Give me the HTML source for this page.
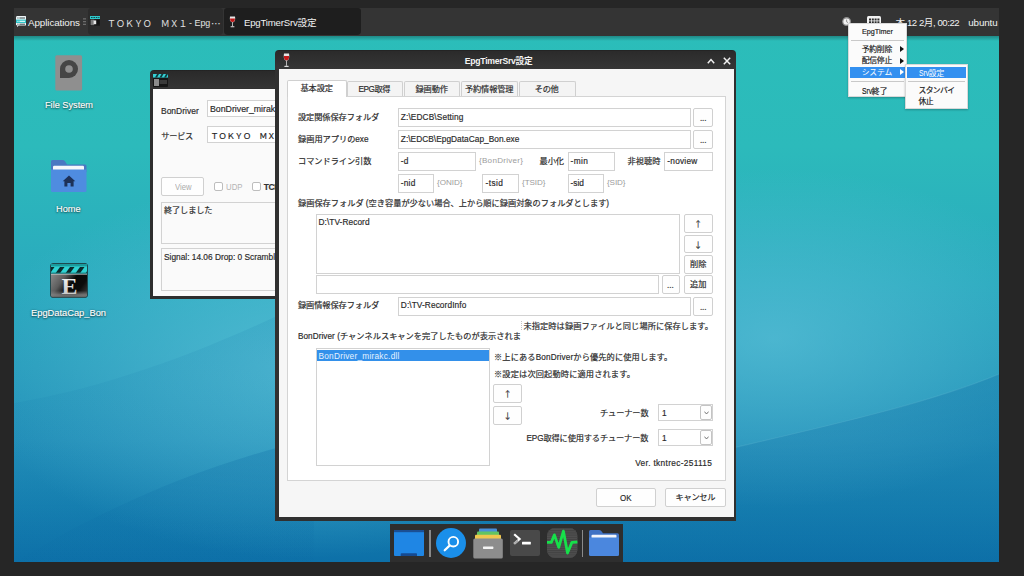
<!DOCTYPE html>
<html lang="ja">
<head>
<meta charset="utf-8">
<title>EpgTimerSrv設定</title>
<style>
*{box-sizing:border-box;margin:0;padding:0}
html,body{width:1024px;height:576px;overflow:hidden;background:#262626}
body{font-family:"Liberation Sans","Noto Sans CJK JP",sans-serif;font-size:10px;color:#222}
#root{position:absolute;left:0;top:0;width:1024px;height:576px;overflow:hidden}
#root div,#root svg{position:absolute}
.t{white-space:nowrap;line-height:14px;height:14px}
.k{-webkit-text-stroke:.18px}
.b{border:1px solid #d2d2d2;background:#fff}
.bt{border:1px solid #d0d0d0;background:#fefefe;border-radius:2px}
.dl{text-shadow:0 1px 2px rgba(0,0,0,.6),0 0 2px rgba(0,0,0,.4);-webkit-text-stroke:.15px}
.tab{border:1px solid #d0d0d0;border-bottom:none;border-radius:2px 2px 0 0;background:#f4f4f4}
</style>
</head>
<body>
<div id="root">
<div id="desk" style="left:14px;top:8px;width:985px;height:554px;overflow:hidden;background:linear-gradient(180deg,#2bbeb9 0%,#2cbabb 25%,#2aaabe 50%,#289cbc 65%,#2390b9 78%,#167fb0 90%,#0d70a8 100%)">
<svg width="985" height="554" viewBox="0 0 985 554" style="left:0;top:0">
 <defs>
  <radialGradient id="rg1" cx="0.5" cy="0.5" r="0.5"><stop offset="0" stop-color="#62c4dc" stop-opacity=".6"/><stop offset="1" stop-color="#62c4dc" stop-opacity="0"/></radialGradient>
  <radialGradient id="rg2" cx="0.5" cy="0.5" r="0.5"><stop offset="0" stop-color="#62c6dc" stop-opacity=".7"/><stop offset="1" stop-color="#5cc2da" stop-opacity="0"/></radialGradient>
  <linearGradient id="lg1" x1="0" y1="0" x2="0" y2="1"><stop offset="0" stop-color="#0b68a2" stop-opacity=".3"/><stop offset=".5" stop-color="#0b68a2" stop-opacity=".2"/><stop offset="1" stop-color="#0b68a2" stop-opacity=".08"/></linearGradient>
  <linearGradient id="lg2" x1="0" y1="0" x2="0" y2="1"><stop offset="0" stop-color="#0b6aa4" stop-opacity=".30"/><stop offset="1" stop-color="#0b6aa4" stop-opacity=".05"/></linearGradient>
 </defs>
 <ellipse cx="760" cy="330" rx="300" ry="170" fill="url(#rg1)"/>
 <ellipse cx="290" cy="360" rx="330" ry="190" fill="url(#rg2)"/>
 <path d="M0 395 C90 380 190 345 300 290 L300 554 L0 554Z" fill="url(#lg2)" opacity=".4"/>
 <path d="M60 520 C140 480 200 455 300 430 L300 554 L0 554 Z" fill="url(#lg2)"/>
 <path d="M600 470 C700 440 880 410 985 366 L985 554 L470 554 C520 520 560 490 600 470 Z" fill="url(#lg1)"/>
 <path d="M600 470 C700 440 880 410 985 366" fill="none" stroke="#8fd8e6" stroke-opacity=".14" stroke-width="1.2"/>
</svg>
</div>
<div style="left:14px;top:36px;width:985px;height:5px;background:linear-gradient(180deg,rgba(0,0,0,.28),rgba(0,0,0,0))"></div><div style="left:14px;top:8px;width:985px;height:28px;background:#343434"></div>
<svg style="left:15.7px;top:16px" width="10.4" height="11" viewBox="0 0 10.4 11"><rect x="0" y="0" width="10.4" height="9.6" rx="1.4" fill="#eef6f8"/><path d="M1 9.4 L1 11 L3 9.4Z" fill="#eef6f8"/><rect x="0" y="3.6" width="10.4" height="3.4" fill="#2fc4c8"/><g fill="#3a4a4c"><rect x="1.4" y="1.5" width="1.1" height="1"/><rect x="3.4" y="1.5" width="5.6" height="1"/><rect x="1.4" y="7.7" width="1.1" height="1"/><rect x="3.4" y="7.7" width="5.6" height="1"/></g><g fill="#f4ffff"><rect x="1.4" y="4.8" width="1.1" height="1"/><rect x="3.4" y="4.8" width="5.6" height="1"/></g></svg>
<div class="t" style="font-size:9.8px;color:#f2f2f2;letter-spacing:-0.08px;left:28px;top:15.6px;">Applications</div>
<svg style="left:82.7px;top:18px" width="3" height="8" viewBox="0 0 3 8"><g fill="#7c7c7c"><rect x="0" y=".4" width="3" height="1"/><rect x="0" y="3.2" width="3" height="1"/><rect x="0" y="5.8" width="3" height="1"/></g></svg>
<div style="left:88px;top:8px;width:135px;height:27px;background:#2b2b2b;border-radius:3px 3px 4px 4px"></div>
<svg style="left:90.2px;top:16px" width="10" height="10" viewBox="0 0 10 10"><rect width="10" height="10" rx=".6" fill="#1c1c1c"/><rect width="10" height="3" fill="#2fc8cc"/><g fill="#0e4a4c"><rect x="1" y="1" width="1.6" height="1"/><rect x="3.4" y="1" width="1.6" height="1"/><rect x="5.8" y="1" width="1.6" height="1"/><rect x="8.2" y="1" width="1.2" height="1"/></g><rect x=".6" y="3.6" width="3.6" height="5.6" fill="#7a7a7a"/><rect x="4.6" y="4" width="4.8" height="4.4" fill="#111"/><rect x="3.6" y="4.4" width="2.6" height="3.8" fill="#e8e8e8"/></svg>
<div class="t" style="font-size:8.95px;color:#e4e4e4;left:107.1px;top:17.4px;">ＴＯＫＹＯ　ＭＸ１</div>
<div class="t" style="font-size:9.8px;color:#e4e4e4;transform:scaleX(0.909);transform-origin:0 50%;left:189.2px;top:15.6px;">- Epg</div>
<div class="t" style="font-size:9.6px;color:#e4e4e4;left:211px;top:15.6px;font-family:'Noto Sans CJK JP',sans-serif;">⋯</div>
<div style="left:224px;top:8px;width:137px;height:27px;background:#1e1e1e;border-radius:3px 3px 4px 4px"></div>
<svg style="left:229px;top:16px" width="7" height="12" viewBox="0 0 7 12"><path d="M1 .5 L6 .5 C6.5 3.5 6 6 3.5 6.5 C1 6 .5 3.5 1 .5Z" fill="#e8e8e8"/><path d="M1.1 2.5 L5.9 2.5 C6 4.5 5.5 5.8 3.5 6.1 C1.5 5.8 1 4.5 1.1 2.5Z" fill="#c01818"/><rect x="3.1" y="6.3" width=".8" height="4" fill="#ddd"/><rect x="1.5" y="10.3" width="4" height="1" rx=".5" fill="#ddd"/></svg>
<div class="t" style="font-size:9.6px;color:#f2f2f2;letter-spacing:-0.19px;left:244px;top:15.6px;">EpgTimerSrv設定</div>
<svg style="left:842px;top:16.9px" width="9.2" height="9.2" viewBox="0 0 9.2 9.2"><circle cx="4.6" cy="4.6" r="4.5" fill="#8e8e8e"/><circle cx="4.6" cy="4.6" r="3.2" fill="#f2f2f2"/><path d="M4.6 2.6V4.8L6 5.6" stroke="#8a8a8a" stroke-width=".9" fill="none"/></svg>
<svg style="left:867px;top:16px" width="14" height="11" viewBox="0 0 14 11"><rect x="0" y="0" width="14" height="11" rx="1.5" fill="#f2f2f2"/><g fill="#2c2c2c"><rect x="2" y="2.5" width="2" height="2"/><rect x="4.8" y="2.5" width="2" height="2"/><rect x="7.6" y="2.5" width="2" height="2"/><rect x="10.4" y="2.5" width="2" height="2"/><rect x="2" y="5.3" width="2" height="2"/><rect x="4.8" y="5.3" width="2" height="2"/><rect x="7.6" y="5.3" width="2" height="2"/><rect x="10.4" y="5.3" width="2" height="2"/><rect x="2" y="8.1" width="2" height="1.6"/><rect x="4.8" y="8.1" width="2" height="1.6"/><rect x="7.6" y="8.1" width="2" height="1.6"/><rect x="10.4" y="8.1" width="2" height="1.6"/></g></svg>
<div class="t" style="font-size:9.6px;color:#f2f2f2;letter-spacing:-0.45px;left:895.6px;top:15.6px;">木 12 2月, 00:22</div>
<div class="t" style="font-size:9.8px;color:#f2f2f2;letter-spacing:-0.09px;left:968.2px;top:15.6px;">ubuntu</div>
<svg style="left:55px;top:54.5px" width="28" height="36" viewBox="0 0 28 36"><rect x=".3" y=".3" width="26.8" height="35.2" rx="1.5" fill="#8f8f8f"/><path d="M14 5 a9 9 0 1 1 0 18 L5 23 L5 14 a9 9 0 0 1 9 -9Z" fill="#454545"/><circle cx="14" cy="14" r="3.8" fill="#8f8f8f"/></svg>
<div class="t dl" style="font-size:9.9px;color:#fff;transform:scaleX(0.930);transform-origin:0 50%;left:44.6px;top:98px;">File System</div>
<svg style="left:51px;top:160px" width="36" height="32" viewBox="0 0 36 32"><path d="M0 1.5 Q0 0 1.5 0 L11.5 0 Q13 0 14 1.2 L16 4.5 L34 4.5 Q35.5 4.5 35.5 6 L35.5 12 L0 12Z" fill="#4a78c2"/><rect x="2" y="5.8" width="31" height="5" rx="1.2" fill="#f4f6fb"/><path d="M0 9.5 L35.5 9.5 L35.5 30.5 Q35.5 32 34 32 L1.5 32 Q0 32 0 30.5Z" fill="#4f8ce0"/><path d="M18 15.5 L24.3 21.3 L22.6 21.3 L22.6 26.5 L19.6 26.5 L19.6 23 L16.4 23 L16.4 26.5 L13.4 26.5 L13.4 21.3 L11.7 21.3Z" fill="#1d3158"/></svg>
<div class="t dl" style="font-size:9.9px;color:#fff;transform:scaleX(0.930);transform-origin:0 50%;left:55.6px;top:202px;">Home</div>
<svg style="left:50px;top:262.5px" width="38" height="35" viewBox="0 0 38 35"><defs><linearGradient id="cb" x1="0" y1=".1" x2="1" y2=".75"><stop offset="0" stop-color="#9a9a9a"/><stop offset=".4" stop-color="#5c5c5c"/><stop offset=".62" stop-color="#080808"/><stop offset=".85" stop-color="#0c0c0c"/><stop offset="1" stop-color="#2e2e2e"/></linearGradient><linearGradient id="cb2" x1="0" y1="0" x2="0" y2="1"><stop offset="0" stop-color="#888" stop-opacity="0"/><stop offset=".72" stop-color="#888" stop-opacity="0"/><stop offset=".9" stop-color="#888" stop-opacity=".8"/><stop offset="1" stop-color="#666" stop-opacity=".9"/></linearGradient><linearGradient id="cbe" x1="0" y1="0" x2="0" y2="1"><stop offset="0" stop-color="#ffffff"/><stop offset="1" stop-color="#bdbdbd"/></linearGradient><clipPath id="cbc"><rect x="1" y="1" width="36" height="10"/></clipPath></defs>
<rect x=".5" y=".5" width="37" height="34" rx="2.5" fill="url(#cb)" stroke="#1d4a50" stroke-width="1"/>
<rect x="1" y="11" width="36" height="23.3" rx="2" fill="url(#cb2)"/>
<rect x="1" y="1" width="36" height="10" rx="1.5" fill="#2fd2d2"/>
<g clip-path="url(#cbc)" fill="#0c2a2c"><path d="M5 11 L10 4 L14.5 4 L9.5 11Z"/><path d="M15 11 L20 4 L24.5 4 L19.5 11Z"/><path d="M25 11 L30 4 L34.5 4 L29.5 11Z"/><path d="M-5 11 L0 4 L4.5 4 L-.5 11Z"/><path d="M35 11 L40 4 L44.5 4 L39.5 11Z"/><rect x="1" y="1" width="36" height="2.4" fill="#1a9a9c"/><rect x="1" y="9.6" width="36" height="1.4" fill="#1a7a7c"/></g>
<rect x="1" y="10.8" width="36" height="1" fill="#c8c8c8" opacity=".75"/>
<text x="19.6" y="30.6" text-anchor="middle" font-family="'Liberation Serif',serif" font-weight="bold" font-size="24" fill="url(#cbe)">E</text></svg>
<div class="t dl" style="font-size:9.9px;color:#fff;transform:scaleX(0.942);transform-origin:0 50%;left:31px;top:306px;">EpgDataCap_Bon</div>
<div style="left:150px;top:70.4px;width:140px;height:229px;background:linear-gradient(180deg,#1f1f1f 0,#2a2a2a 1.2px,#343434 18px,#2e2e2e 19px);border-radius:4px 4px 0 0"></div>
<div style="left:153px;top:88.8px;width:137px;height:207.5px;background:#fafafa"></div>
<svg style="left:153px;top:74px" width="15" height="13" viewBox="0 0 15 13"><rect width="15" height="13" rx="1" fill="#161616"/><rect width="15" height="3.6" fill="#35cfd4"/><g fill="#0e3a3c"><path d="M2 3.6 L4 0 L6 0 L4 3.6Z"/><path d="M6.5 3.6 L8.5 0 L10.5 0 L8.5 3.6Z"/><path d="M11 3.6 L13 0 L15 0 L13 3.6Z"/></g><rect x="1" y="5" width="5" height="7" fill="#8c8c8c"/><rect x="6.5" y="6" width="7.5" height="4" fill="#3a3a3a"/></svg>
<div class="t k" style="font-size:8.8px;color:#2b2b2b;transform:scaleX(0.964);transform-origin:0 50%;left:161.3px;top:103.6px;">BonDriver</div>
<div class="b" style="left:207px;top:100px;width:85px;height:17px;"></div>
<div class="t k" style="font-size:8.8px;color:#2b2b2b;letter-spacing:-0.02px;left:210px;top:102px;">BonDriver_mirakc.dll</div>
<div class="t k" style="font-size:8.2px;color:#2b2b2b;letter-spacing:-0.26px;left:161.3px;top:130.4px;">サービス</div>
<div class="b" style="left:207px;top:126px;width:85px;height:17px;"></div>
<div class="t k" style="font-size:8.15px;color:#222;left:210.4px;top:129.8px;">ＴＯＫＹＯ　ＭＸ１</div>
<div class="bt" style="left:161px;top:177px;width:43px;height:19px;"></div>
<div class="t" style="font-size:8.8px;color:#ababab;transform:scaleX(0.872);transform-origin:0 50%;left:174.5px;top:179.5px;">View</div>
<div style="left:214px;top:182px;width:8.8px;height:8.8px;border:1px solid #bdbdbd;border-radius:2px;background:#fff"></div>
<div class="t" style="font-size:8.5px;color:#b4b4b4;transform:scaleX(0.919);transform-origin:0 50%;left:225.8px;top:180px;">UDP</div>
<div style="left:252.2px;top:182px;width:8.8px;height:8.8px;border:1px solid #bdbdbd;border-radius:2px;background:#fff"></div>
<div class="t k" style="font-size:8.5px;color:#333;font-weight:bold;left:263.8px;top:180px;letter-spacing:-.5px;">TCP</div>
<div class="b" style="left:161px;top:202px;width:131px;height:42px;background:#fafafa"></div>
<div class="t k" style="font-size:8.2px;color:#2b2b2b;letter-spacing:-0.13px;left:164px;top:203.8px;">終了しました</div>
<div class="b" style="left:161px;top:248px;width:131px;height:43px;background:#fafafa"></div>
<div class="t k" style="font-size:8.8px;color:#2b2b2b;transform:scaleX(0.946);transform-origin:0 50%;left:164px;top:250px;">Signal: 14.06 Drop: 0 Scramble: 0</div>
<div style="left:275.2px;top:50px;width:461.3px;height:470.6px;background:linear-gradient(180deg,#1f1f1f 0,#2b2b2b 1.2px,#363636 19px,#303030 20px);border-radius:4px 4px 0 0"></div>
<div style="left:279px;top:69.3px;width:455px;height:448px;background:#f6f6f6"></div>
<svg style="left:283px;top:53px" width="7" height="15" viewBox="0 0 7 15"><path d="M1 .5 L6 .5 C6.6 4 6.2 7.2 3.5 7.8 C.8 7.2 .4 4 1 .5Z" fill="#e4e4e4"/><path d="M1 3 L6 3 C6.2 5.4 5.6 7 3.5 7.4 C1.4 7 .8 5.4 1 3Z" fill="#c41a1a"/><rect x="3.1" y="7.6" width=".8" height="5.2" fill="#d8d8d8"/><rect x="1.3" y="12.8" width="4.4" height="1.2" rx=".6" fill="#d8d8d8"/></svg>
<div class="t" style="font-size:8.7px;color:#f4f4f4;font-weight:bold;letter-spacing:-0.29px;left:464.8px;top:53.5px;">EpgTimerSrv設定</div>
<svg style="left:707px;top:58px" width="8" height="6" viewBox="0 0 8 6"><path d="M.8 5.2 L4 1.6 L7.2 5.2" fill="none" stroke="#f0f0f0" stroke-width="1.5"/></svg>
<svg style="left:722.5px;top:56.5px" width="8" height="8" viewBox="0 0 8 8"><path d="M.8 .8 L7.2 7.2 M7.2 .8 L.8 7.2" fill="none" stroke="#f0f0f0" stroke-width="1.5"/></svg>
<div class="b" style="left:287px;top:96px;width:439px;height:385px;border-color:#d4d4d4"></div>
<div class="tab" style="left:347px;top:81px;width:56px;height:15px;"></div>
<div class="tab" style="left:404px;top:81px;width:56px;height:15px;"></div>
<div class="tab" style="left:461px;top:81px;width:57px;height:15px;"></div>
<div class="tab" style="left:519px;top:81px;width:57px;height:15px;"></div>
<div class="tab" style="left:287px;top:80px;width:60px;height:17px;background:#fff"></div>
<div class="t k" style="font-size:8.2px;color:#2b2b2b;letter-spacing:-0.09px;left:300.5px;top:82.2px;">基本設定</div>
<div class="t k" style="font-size:8.2px;color:#2b2b2b;letter-spacing:-0.42px;left:358.5px;top:82.6px;">EPG取得</div>
<div class="t k" style="font-size:8.2px;color:#2b2b2b;letter-spacing:-0.09px;left:415.5px;top:82.6px;">録画動作</div>
<div class="t k" style="font-size:8.2px;color:#2b2b2b;letter-spacing:-0.13px;left:465px;top:82.6px;">予約情報管理</div>
<div class="t k" style="font-size:8.2px;color:#2b2b2b;letter-spacing:-0.29px;left:534.8px;top:82.6px;">その他</div>
<div class="t k" style="font-size:8.2px;color:#2b2b2b;letter-spacing:-0.07px;left:298px;top:110.8px;">設定関係保存フォルダ</div>
<div class="b" style="left:398px;top:108px;width:293px;height:19px;"></div>
<div class="t k" style="font-size:8.3px;color:#2b2b2b;letter-spacing:0.12px;left:400.8px;top:110px;">Z:\EDCB\Setting</div>
<div class="bt" style="left:693px;top:108px;width:20px;height:19px;"></div>
<div class="t" style="font-size:8px;color:#4a4a4a;font-weight:bold;left:699.9px;top:111.9px;">...</div>
<div class="t k" style="font-size:8.2px;color:#2b2b2b;left:298px;top:132.8px;">録画用アプリのexe</div>
<div class="b" style="left:398px;top:130px;width:293px;height:19px;"></div>
<div class="t k" style="font-size:8.3px;color:#2b2b2b;letter-spacing:0.04px;left:400.8px;top:132px;">Z:\EDCB\EpgDataCap_Bon.exe</div>
<div class="bt" style="left:693px;top:130px;width:20px;height:19px;"></div>
<div class="t" style="font-size:8px;color:#4a4a4a;font-weight:bold;left:699.9px;top:133.9px;">...</div>
<div class="t k" style="font-size:8.2px;color:#2b2b2b;letter-spacing:-0.03px;left:298px;top:154.8px;">コマンドライン引数</div>
<div class="b" style="left:398px;top:152px;width:78px;height:19px;"></div>
<div class="t k" style="font-size:8.3px;color:#2b2b2b;letter-spacing:0.11px;left:400.8px;top:154px;">-d</div>
<div class="t" style="font-size:8.1px;color:#9c9c9c;letter-spacing:0.26px;left:479px;top:154px;">{BonDriver}</div>
<div class="t k" style="font-size:8.2px;color:#2b2b2b;letter-spacing:-0.04px;left:539.5px;top:154.8px;">最小化</div>
<div class="b" style="left:568px;top:152px;width:47px;height:19px;"></div>
<div class="t k" style="font-size:8.3px;color:#2b2b2b;letter-spacing:0.45px;left:570.5px;top:154px;">-min</div>
<div class="t k" style="font-size:8.2px;color:#2b2b2b;letter-spacing:0.08px;left:627.5px;top:154.8px;">非視聴時</div>
<div class="b" style="left:664px;top:152px;width:49px;height:19px;"></div>
<div class="t k" style="font-size:8.3px;color:#2b2b2b;letter-spacing:0.23px;left:667.3px;top:154px;">-noview</div>
<div class="b" style="left:398px;top:174px;width:36px;height:19px;"></div>
<div class="t k" style="font-size:8.3px;color:#2b2b2b;letter-spacing:0.22px;left:400.8px;top:175.5px;">-nid</div>
<div class="t" style="font-size:8.1px;color:#9c9c9c;letter-spacing:-0.03px;left:437px;top:175.6px;">{ONID}</div>
<div class="b" style="left:482px;top:174px;width:37px;height:19px;"></div>
<div class="t k" style="font-size:8.3px;color:#2b2b2b;letter-spacing:0.45px;left:485.5px;top:175.5px;">-tsid</div>
<div class="t" style="font-size:8.1px;color:#9c9c9c;letter-spacing:-0.07px;left:522px;top:175.6px;">{TSID}</div>
<div class="b" style="left:568px;top:174px;width:36px;height:19px;"></div>
<div class="t k" style="font-size:8.3px;color:#2b2b2b;letter-spacing:0.04px;left:570.5px;top:175.5px;">-sid</div>
<div class="t" style="font-size:8.1px;color:#9c9c9c;letter-spacing:-0.10px;left:607px;top:175.6px;">{SID}</div>
<div class="t k" style="font-size:8.2px;color:#2b2b2b;letter-spacing:0.01px;left:298px;top:197.3px;">録画保存フォルダ (空き容量が少ない場合、上から順に録画対象のフォルダとします)</div>
<div class="b" style="left:316px;top:214px;width:364px;height:60px;"></div>
<div class="t k" style="font-size:8.3px;color:#2b2b2b;letter-spacing:0.07px;left:318.5px;top:214.6px;">D:\TV-Record</div>
<div class="bt" style="left:684px;top:214px;width:29px;height:19px;"></div>
<div class="t k" style="font-size:8.2px;color:#333;left:693.9px;top:216.1px;font-family:'Noto Sans CJK JP',sans-serif;">↑</div>
<div class="bt" style="left:684px;top:235px;width:29px;height:18px;"></div>
<div class="t k" style="font-size:8.2px;color:#333;left:693.9px;top:237px;font-family:'Noto Sans CJK JP',sans-serif;">↓</div>
<div class="bt" style="left:684px;top:255px;width:29px;height:19px;"></div>
<div class="t k" style="font-size:8.2px;color:#2b2b2b;letter-spacing:0.11px;left:690px;top:258px;">削除</div>
<div class="bt" style="left:684px;top:275px;width:29px;height:19px;"></div>
<div class="t k" style="font-size:8.2px;color:#2b2b2b;letter-spacing:0.11px;left:690px;top:278px;">追加</div>
<div class="b" style="left:316px;top:275px;width:343px;height:19px;"></div>
<div class="bt" style="left:662px;top:275px;width:18px;height:19px;"></div>
<div class="t" style="font-size:8px;color:#4a4a4a;font-weight:bold;left:667px;top:278.5px;">...</div>
<div class="t k" style="font-size:8.2px;color:#2b2b2b;letter-spacing:-0.07px;left:298px;top:299.3px;">録画情報保存フォルダ</div>
<div class="b" style="left:398px;top:297px;width:293px;height:19px;"></div>
<div class="t k" style="font-size:8.3px;color:#2b2b2b;letter-spacing:0.09px;left:400.8px;top:297.8px;">D:\TV-RecordInfo</div>
<div class="bt" style="left:693px;top:297px;width:20px;height:19px;"></div>
<div class="t" style="font-size:8px;color:#4a4a4a;font-weight:bold;left:699.9px;top:300.9px;">...</div>
<div class="t k" style="font-size:8.2px;color:#2b2b2b;letter-spacing:0.09px;left:523.5px;top:320.1px;">未指定時は録画ファイルと同じ場所に保存します。</div>
<div style="left:521px;top:321px;width:1px;height:9px;background:repeating-linear-gradient(180deg,#c4c4c4 0 1px,transparent 1px 2px)"></div>
<div class="t k" style="font-size:8.2px;color:#2b2b2b;letter-spacing:0.05px;left:298px;top:330.3px;">BonDriver (チャンネルスキャンを完了したものが表示されま</div>
<div class="b" style="left:316px;top:348px;width:174px;height:118px;"></div>
<div style="left:317px;top:349.5px;width:172px;height:11px;background:#3390ea"></div>
<div class="t" style="font-size:8.3px;color:#e6f2ff;letter-spacing:0.23px;left:318.5px;top:348.9px;">BonDriver_mirakc.dll</div>
<div class="t k" style="font-size:8.2px;color:#2b2b2b;letter-spacing:0.14px;left:494px;top:350.8px;">※上にあるBonDriverから優先的に使用します。</div>
<div class="t k" style="font-size:8.2px;color:#2b2b2b;letter-spacing:0.16px;left:494px;top:368px;">※設定は次回起動時に適用されます。</div>
<div class="bt" style="left:493px;top:384px;width:29px;height:19px;"></div>
<div class="t k" style="font-size:8.2px;color:#333;left:503.5px;top:385.9px;font-family:'Noto Sans CJK JP',sans-serif;">↑</div>
<div class="bt" style="left:493px;top:406px;width:29px;height:19px;"></div>
<div class="t k" style="font-size:8.2px;color:#333;left:503.5px;top:408.2px;font-family:'Noto Sans CJK JP',sans-serif;">↓</div>
<div class="t k" style="font-size:8.2px;color:#2b2b2b;letter-spacing:-0.11px;left:600px;top:407px;">チューナー数</div>
<div class="b" style="left:658px;top:404px;width:55px;height:17px;"></div>
<div class="t k" style="font-size:8.3px;color:#2b2b2b;left:662px;top:405.8px;">1</div>
<div class="bt" style="left:700px;top:405px;width:12px;height:15px;border-color:#c4c4c4"></div>
<svg style="left:703.5px;top:411px" width="5" height="4" viewBox="0 0 5 4"><path d="M.4 .6 L2.5 3 L4.6 .6" fill="none" stroke="#555" stroke-width=".8"/></svg>
<div class="t k" style="font-size:8.2px;color:#2b2b2b;letter-spacing:-0.12px;left:526.5px;top:431.8px;">EPG取得に使用するチューナー数</div>
<div class="b" style="left:658px;top:429px;width:55px;height:17px;"></div>
<div class="t k" style="font-size:8.3px;color:#2b2b2b;left:662px;top:430.6px;">1</div>
<div class="bt" style="left:700px;top:430px;width:12px;height:15px;border-color:#c4c4c4"></div>
<svg style="left:703.5px;top:435.8px" width="5" height="4" viewBox="0 0 5 4"><path d="M.4 .6 L2.5 3 L4.6 .6" fill="none" stroke="#555" stroke-width=".8"/></svg>
<div class="t k" style="font-size:8.3px;color:#2b2b2b;letter-spacing:0.33px;left:635.2px;top:455.5px;">Ver. tkntrec-251115</div>
<div class="bt" style="left:596px;top:488px;width:60px;height:19px;"></div>
<div class="t k" style="font-size:8.3px;color:#2b2b2b;transform:scaleX(0.958);transform-origin:0 50%;left:620px;top:490.5px;">OK</div>
<div class="bt" style="left:665px;top:488px;width:61px;height:19px;"></div>
<div class="t k" style="font-size:8.2px;color:#2b2b2b;letter-spacing:-0.24px;left:675.5px;top:491.3px;">キャンセル</div>
<div style="left:848.2px;top:23.4px;width:58.8px;height:73.2px;background:#fbfbfb;border:1px solid #d9d9d9;box-shadow:0 1px 2px rgba(0,0,0,.25)"></div>
<div class="t k" style="font-size:7.8px;color:#1c1c1c;transform:scaleX(0.925);transform-origin:0 50%;left:861.7px;top:25px;">EpgTimer</div>
<div style="left:851px;top:39.8px;width:53px;height:1px;background:#c9c9c9"></div>
<div class="t k" style="font-size:7.8px;color:#1c1c1c;letter-spacing:-0.23px;left:861.7px;top:42.8px;">予約削除</div>
<svg style="left:900px;top:46px" width="4" height="6" viewBox="0 0 4 6"><path d="M0 0 L4 3 L0 6Z" fill="#111"/></svg>
<div class="t k" style="font-size:7.8px;color:#1c1c1c;letter-spacing:-0.23px;left:861.7px;top:54.3px;">配信停止</div>
<svg style="left:900px;top:57.5px" width="4" height="6" viewBox="0 0 4 6"><path d="M0 0 L4 3 L0 6Z" fill="#111"/></svg>
<div style="left:849.8px;top:66.5px;width:56.4px;height:11.3px;background:#3390f0"></div>
<div class="t" style="font-size:7.8px;color:#fff;letter-spacing:-0.15px;left:861.7px;top:65.8px;">システム</div>
<svg style="left:900px;top:69px" width="4" height="6" viewBox="0 0 4 6"><path d="M0 0 L4 3 L0 6Z" fill="#fff"/></svg>
<div style="left:851px;top:80.6px;width:53px;height:1px;background:#c9c9c9"></div>
<div class="t k" style="font-size:7.8px;color:#1c1c1c;left:861.7px;top:83.8px;"><span style="display:inline-block;font-size:8.3px;transform:scaleX(.82);transform-origin:0 50%;margin-right:-2.3px">Srv</span>終了</div>
<div style="left:905px;top:64.2px;width:63px;height:44.8px;background:#fbfbfb;border:1px solid #d9d9d9;box-shadow:0 1px 2px rgba(0,0,0,.25)"></div>
<div style="left:907px;top:66.5px;width:59px;height:11.3px;background:#3390f0"></div>
<div class="t" style="font-size:7.8px;color:#fff;left:918.5px;top:65.8px;"><span style="display:inline-block;font-size:8.3px;transform:scaleX(.82);transform-origin:0 50%;margin-right:-2.3px">Srv</span>設定</div>
<div style="left:908px;top:80.6px;width:57px;height:1px;background:#c9c9c9"></div>
<div class="t k" style="font-size:7.8px;color:#1c1c1c;letter-spacing:-0.62px;left:918.5px;top:83.8px;">スタンバイ</div>
<div class="t k" style="font-size:7.8px;color:#1c1c1c;letter-spacing:-0.59px;left:918.5px;top:95.2px;">休止</div>
<div style="left:389.8px;top:524.3px;width:233.4px;height:37.7px;background:#2e2e2e"></div>
<svg style="left:393.7px;top:530px" width="30" height="26" viewBox="0 0 30 26"><rect width="30" height="26" rx="1" fill="#1f86e4"/><rect width="30" height="2.2" fill="#1b4f94"/><path d="M6.7 26 L6.7 24 Q6.7 23.2 7.5 23.2 L22.2 23.2 Q23 23.2 23 24 L23 26Z" fill="#164a90"/></svg>
<div style="left:429.1px;top:530.2px;width:1.6px;height:26.4px;background:#8a8a8a"></div>
<svg style="left:436px;top:528px" width="30" height="30" viewBox="0 0 30 30"><circle cx="15" cy="15" r="15" fill="#1a8fea"/><circle cx="17.3" cy="13.7" r="4.8" fill="none" stroke="#fff" stroke-width="1.9"/><path d="M13.8 17.4 L8.7 22.3" stroke="#fff" stroke-width="2.2" stroke-linecap="round"/></svg>
<svg style="left:473px;top:527.5px" width="30" height="31" viewBox="0 0 30 31"><rect x="6" y="0.5" width="18" height="5" rx="1" fill="#4a90d9"/><rect x="4" y="3.5" width="22" height="5" rx="1" fill="#62c462"/><rect x="2" y="6.7" width="26" height="5" rx="1" fill="#f0c84e"/><rect x=".3" y="10.5" width="29.5" height="20" rx="1.5" fill="#8d8d8d"/><rect x="10" y="18.5" width="10.4" height="2.4" rx=".6" fill="#f4f4f4"/></svg>
<svg style="left:510px;top:530px" width="30" height="26" viewBox="0 0 30 26"><rect width="30" height="26" rx="2" fill="#494949"/><path d="M4.2 4.2 L9.6 9 L4.2 13.8" fill="none" stroke="#fff" stroke-width="2.2"/><path d="M4.2 13.8 L8 10.4" fill="none" stroke="#aaa" stroke-width="2.2"/><rect x="12" y="11.7" width="8.8" height="2.7" rx=".5" fill="#fff"/></svg>
<svg style="left:547px;top:528px" width="31" height="30" viewBox="0 0 31 30"><defs><pattern id="st" width="2" height="2.2" patternUnits="userSpaceOnUse"><rect width="2" height="1.1" fill="#434343"/></pattern></defs><rect width="30.4" height="30" rx="8" fill="#505050"/><rect width="30.4" height="30" rx="8" fill="url(#st)"/><path d="M0 14.4 L4.3 14.4 L7.4 6.9 L11.75 19.4 L16.4 3.1 L20.5 25 L24.9 14.4 L30.4 14" fill="none" stroke="#16e04a" stroke-width="2.8" stroke-linejoin="round"/></svg>
<div style="left:581.9px;top:530.2px;width:1.6px;height:27px;background:#8a8a8a"></div>
<svg style="left:589.4px;top:530px" width="30" height="26" viewBox="0 0 30 26"><path d="M0 1.5 Q0 0 1.5 0 L10 0 Q11.5 0 12.3 1 L14 3.2 L28.5 3.2 Q30 3.2 30 4.7 L30 10 L0 10Z" fill="#3f72c4"/><rect x="2.5" y="4.8" width="25" height="3.4" rx="1" fill="#f2f5fb"/><path d="M0 7.6 L30 7.6 L30 24.5 Q30 26 28.5 26 L1.5 26 Q0 26 0 24.5Z" fill="#4b87de"/></svg>
</div>
</body>
</html>
